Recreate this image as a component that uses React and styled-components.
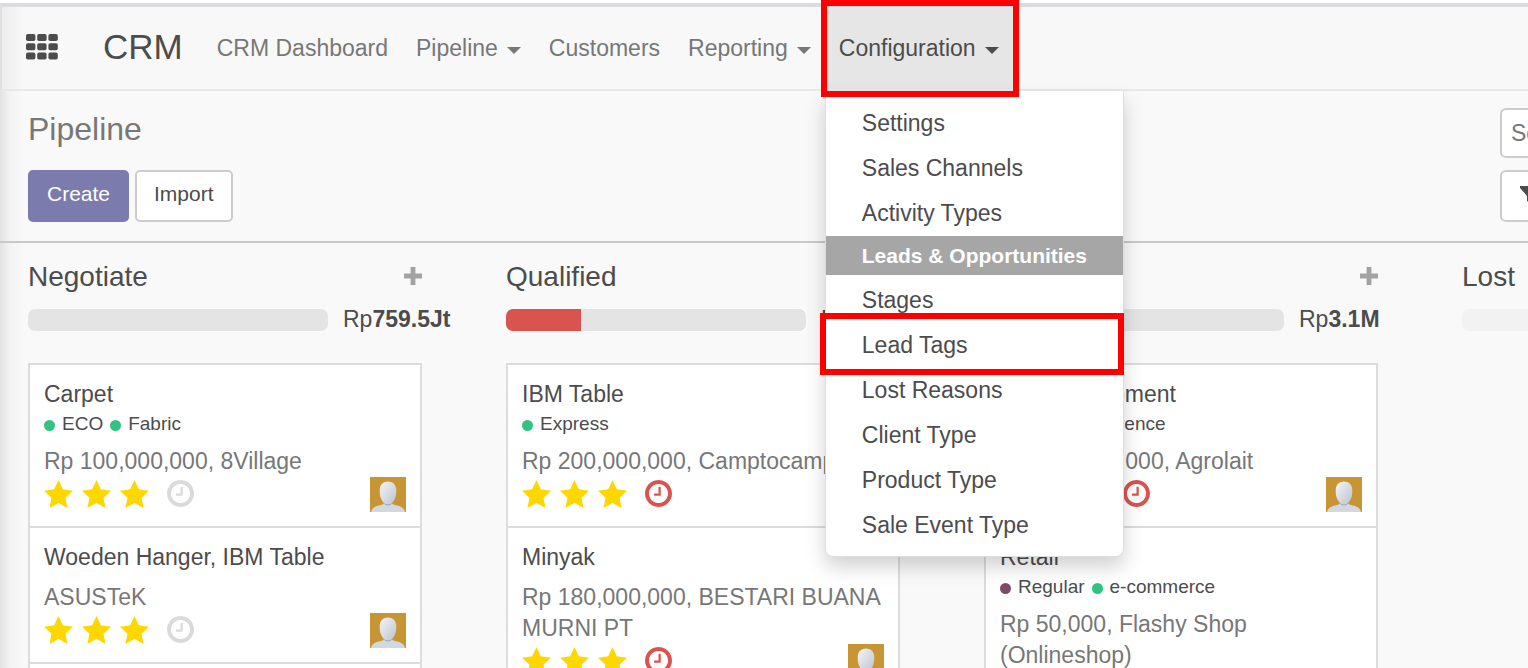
import { useState } from 'react';
import styled, { createGlobalStyle } from 'styled-components';

const stages = [
  {
    name: 'Negotiate',
    amount: '759.5Jt',
    progress: 0,
    cards: [
      {
        title: 'Carpet',
        tags: [{ name: 'ECO', color: '#30c381' }, { name: 'Fabric', color: '#30c381' }],
        info: 'Rp 100,000,000, 8Village',
      },
      { title: 'Woeden Hanger, IBM Table', info: 'ASUSTeK' },
      { title: '' },
    ],
  },
  {
    name: 'Qualified',
    amount: '430Jt',
    progress: 25,
    cards: [
      {
        title: 'IBM Table',
        tags: [{ name: 'Express', color: '#30c381' }],
        info: 'Rp 200,000,000, Camptocamp',
        late: true,
      },
      { title: 'Minyak', info: 'Rp 180,000,000, BESTARI BUANA MURNI PT', late: true },
    ],
  },
  {
    name: 'Won',
    amount: '3.1M',
    progress: 0,
    cards: [
      {
        title: 'Office Equipment',
        tags: [{ name: 'Video conference', color: '#30c381' }],
        info: 'Rp 500,000,000, Agrolait',
        late: true,
      },
      {
        title: 'Retail',
        tags: [{ name: 'Regular', color: '#814968' }, { name: 'e-commerce', color: '#30c381' }],
        info: 'Rp 50,000, Flashy Shop (Onlineshop)',
        late: true,
      },
    ],
  },
  { name: 'Lost', folded: true, progress: 0, cards: [] },
];

const configItems = ['Settings', 'Sales Channels', 'Activity Types'];
const leadItems = ['Stages', 'Lead Tags', 'Lost Reasons', 'Client Type', 'Product Type', 'Sale Event Type'];

function AppsIcon() {
  return (
    <svg width="32" height="26" viewBox="0 0 32 26" fill="#4c4c4c" aria-hidden="true">
      {[0, 9.3, 18.6].map((y) => [0, 11.2, 22.4].map((x) => (
        <rect key={`${x}-${y}`} x={x} y={y} width="9.4" height="7" rx="1.8" />
      )))}
    </svg>
  );
}

function Star() {
  return (
    <svg width="29" height="28" viewBox="0 0 29 28" fill="#ffd700" aria-hidden="true">
      <path d="M14.5 0 18.8 9.3 29 10.7 21.5 17.7 23.6 28 14.5 23 5.4 28 7.5 17.7 0 10.7 10.2 9.3Z" />
    </svg>
  );
}

function Clock() {
  return (
    <svg width="27" height="27" viewBox="128 128 1536 1536" fill="currentColor" aria-hidden="true">
      <path d="M1024 544v448q0 14-9 23t-23 9h-320q-14 0-23-9t-9-23v-64q0-14 9-23t23-9h224v-352q0-14 9-23t23-9h64q14 0 23 9t9 23zm416 352q0-148-73-273t-198-198-273-73-273 73-198 198-73 273 73 273 198 198 273 73 273-73 198-198 73-273zm224 0q0 209-103 385.5t-279.5 279.5-385.5 103-385.5-103-279.5-279.5-103-385.5 103-385.5 279.5-279.5 385.5-103 385.5 103 279.5 279.5 103 385.5z" />
    </svg>
  );
}

function Avatar() {
  return (
    <svg width="36" height="35" viewBox="0 0 36 35" role="img" aria-label="Salesperson">
      <defs>
        <linearGradient id="skin" x1="0" y1="0" x2="1" y2="1">
          <stop offset="0" stopColor="#f4f5f7" />
          <stop offset="1" stopColor="#bcc3cf" />
        </linearGradient>
      </defs>
      <rect width="36" height="35" fill="#c79534" />
      <path d="M1 35C2 30.500 6 29 10 28.300 13 27.800 14 27 14 25H22C22 27 23 27.800 26 28.300 30 29 34 30.500 35 35Z" fill="#d3d8df" />
      <path d="M13.500 26.500Q18 30.500 22.500 26.500L22 24H14Z" fill="#9fabbd" />
      <path d="M18 4.500C23.500 4.500 26.300 8 26.300 13.500 26.300 16.500 26 19.500 24.800 22 23.300 25.500 21 27.300 18 27.300S12.700 25.500 11.200 22C10 19.500 9.700 16.500 9.700 13.500 9.700 8 12.500 4.500 18 4.500Z" fill="url(#skin)" />
    </svg>
  );
}

export default function App() {
  const [open, setOpen] = useState(true);
  const [search, setSearch] = useState('');

  return (
    <>
      <GlobalStyle />
      <Page>
        <TopStrip />
        <Navbar>
          <AppsButton type="button" aria-label="Applications"><AppsIcon /></AppsButton>
          <Brand href="#crm">CRM</Brand>
          <NavLink href="#dashboard">CRM Dashboard</NavLink>
          <NavButton type="button">Pipeline<Caret /></NavButton>
          <NavLink href="#customers">Customers</NavLink>
          <NavButton type="button">Reporting<Caret /></NavButton>
          <Dropdown>
            <NavButton type="button" $active={open} aria-expanded={open} onClick={() => setOpen(!open)}>
              Configuration<Caret />
            </NavButton>
            <Frame />
            {open && (
              <Menu>
                {configItems.map((item) => <MenuItem href="#menu" key={item}>{item}</MenuItem>)}
                <MenuHeader>Leads &amp; Opportunities</MenuHeader>
                {leadItems.map((item) => (
                  <MenuItem href="#menu" key={item}>
                    {item}
                    {item === 'Lead Tags' && <ItemFrame />}
                  </MenuItem>
                ))}
              </Menu>
            )}
          </Dropdown>
        </Navbar>

        <ControlPanel>
          <div>
            <Title>Pipeline</Title>
            <Buttons>
              <Button type="button" $primary>Create</Button>
              <Button type="button">Import</Button>
            </Buttons>
          </div>
          <SearchArea>
            <SearchInput
              aria-label="Search"
              placeholder="Search..."
              value={search}
              onChange={(e) => setSearch(e.target.value)}
            />
            <FilterButton type="button" aria-label="Filters">
              <svg width="20" height="20" viewBox="0 0 20 20" fill="#4c4c4c" aria-hidden="true">
                <path d="M0 0h20v2l-7 8v10l-6-5v-5L0 2Z" />
              </svg>
            </FilterButton>
          </SearchArea>
        </ControlPanel>

        <Board>
          {stages.map((stage) => (
            <Column key={stage.name}>
              <ColumnHeader>
                <ColumnTitle>{stage.name}</ColumnTitle>
                {!stage.folded && (
                  <AddButton type="button" aria-label={`Add to ${stage.name}`}>
                    <svg width="18" height="18" viewBox="0 0 18 18" fill="#a3a3a3" aria-hidden="true">
                      <path d="M6.600 0h4.800v6.600H18v4.800h-6.600V18H6.600v-6.600H0V6.600h6.600Z" />
                    </svg>
                  </AddButton>
                )}
              </ColumnHeader>
              <Counter>
                <Progress $folded={stage.folded}>
                  <Bar style={{ width: `${stage.progress}%` }} />
                </Progress>
                {stage.amount && <Amount>Rp<b>{stage.amount}</b></Amount>}
              </Counter>
              {stage.cards.map((card) => (
                <Card key={card.title}>
                  <CardTitle>{card.title}</CardTitle>
                  {card.tags && (
                    <Tags>
                      {card.tags.map((tag) => (
                        <Tag key={tag.name}><Dot $color={tag.color} />{tag.name}</Tag>
                      ))}
                    </Tags>
                  )}
                  <CardInfo>{card.info}</CardInfo>
                  <CardFooter>
                    <Stars><Star /><Star /><Star /></Stars>
                    <Activity $late={card.late}><Clock /></Activity>
                    <Avatar />
                  </CardFooter>
                </Card>
              ))}
            </Column>
          ))}
        </Board>
      </Page>
    </>
  );
}

const GlobalStyle = createGlobalStyle`
  * {
    box-sizing: border-box;
  }
  body {
    margin: 0;
    background: #f9f9f9;
    color: #4c4c4c;
    font-family: "Liberation Sans", Arial, sans-serif;
    font-size: 23px;
    line-height: 31px;
  }
  button, input {
    font: inherit;
    color: inherit;
  }
  a {
    color: inherit;
    text-decoration: none;
  }
`;

const Page = styled.div`
  height: 100vh;
  overflow: hidden;
  display: flex;
  flex-direction: column;
  background: linear-gradient(to right, #e2e2e2, #f3f3f3 10px, #f9f9f9 24px);
`;

const TopStrip = styled.div`
  flex: none;
  height: 3px;
  background: #fff;
`;

const Navbar = styled.nav`
  display: flex;
  flex: none;
  height: 88px;
  border-top: 4px solid #dcdce0;
  border-bottom: 2px solid #e8e8e8;
  border-left: 2px solid #e0e0e0;
  background: linear-gradient(to right, #ededed, #f8f8f8 22px);
`;

const AppsButton = styled.button`
  display: flex;
  align-items: center;
  padding: 0 24px 2px;
  border: 0;
  background: none;
`;

const Brand = styled.a`
  padding: 0 20px 0 21px;
  font-size: 35px;
  line-height: 79px;
`;

const NavLink = styled.a`
  padding: 0 14px;
  line-height: 82px;
  color: #777;
  white-space: nowrap;
`;

const NavButton = styled.button`
  display: flex;
  align-items: center;
  gap: 9px;
  height: 82px;
  padding: 0 14px;
  border: 0;
  line-height: 82px;
  color: ${(props) => (props.$active ? '#4c4c4c' : '#777')};
  background: ${(props) => (props.$active ? '#e6e6e6' : 'none')};
`;

const Caret = styled.span`
  margin-top: 4px;
  border-top: 7px solid currentColor;
  border-left: 7px solid transparent;
  border-right: 7px solid transparent;
`;

const Dropdown = styled.div`
  position: relative;
`;

const Frame = styled.div`
  position: absolute;
  z-index: 3;
  inset: -7px -6px -8px -4px;
  border: 6px solid #f00;
  pointer-events: none;
`;

const Menu = styled.div`
  position: absolute;
  z-index: 2;
  top: 84px;
  left: 0;
  width: 299px;
  padding: 10px 0 8px;
  border: 1px solid #dedede;
  border-top: 0;
  border-radius: 0 0 8px 8px;
  background: #fff;
  box-shadow: 0 10px 20px rgba(0, 0, 0, 0.18);
`;

const MenuItem = styled.a`
  position: relative;
  display: block;
  padding: 7px 36px;
  white-space: nowrap;
`;

const ItemFrame = styled.span`
  position: absolute;
  inset: -10px -1px -7px -6px;
  border: 6px solid #f00;
`;

const MenuHeader = styled.div`
  margin-bottom: 3px;
  padding: 0 34px 0 36px;
  font-size: 21px;
  font-weight: bold;
  line-height: 39px;
  white-space: nowrap;
  color: #fff;
  background: #a6a6a6;
`;

const ControlPanel = styled.header`
  display: flex;
  flex: none;
  justify-content: space-between;
  padding: 16px 0 19px 28px;
  border-bottom: 2px solid #c8c8c8;
`;

const Title = styled.h1`
  margin: 0 0 19px;
  font-size: 32px;
  font-weight: normal;
  line-height: 44px;
  color: #777;
`;

const Buttons = styled.div`
  display: flex;
  gap: 6px;
`;

const Button = styled.button`
  height: 52px;
  padding: 0 17px 5px;
  border: 2px solid ${(props) => (props.$primary ? '#7c7bad' : '#ccc')};
  border-radius: 5px;
  font-size: 21px;
  color: ${(props) => (props.$primary ? '#fff' : '#4c4c4c')};
  background: ${(props) => (props.$primary ? '#7c7bad' : '#fff')};
`;

/* the search area runs past the right edge of the window */
const SearchArea = styled.div`
  display: flex;
  flex-direction: column;
  justify-content: flex-end;
  gap: 12px;
  width: 28px;
`;

const SearchInput = styled.input`
  width: 400px;
  height: 50px;
  padding: 0 9px;
  border: 2px solid #ccc;
  border-radius: 6px;
  background: #fff;
  &::placeholder {
    color: #777;
  }
`;

const FilterButton = styled.button`
  display: flex;
  width: 120px;
  height: 52px;
  padding: 14px 18px;
  border: 2px solid #ccc;
  border-radius: 6px;
  background: #fff;
`;

const Board = styled.main`
  display: flex;
  gap: 84px;
  padding: 16px 28px;
`;

const Column = styled.section`
  flex: none;
  width: 394px;
`;

const ColumnHeader = styled.div`
  display: flex;
  align-items: center;
  justify-content: space-between;
  height: 36px;
`;

const ColumnTitle = styled.h2`
  margin: 0;
  font-size: 28px;
  font-weight: normal;
  line-height: 36px;
`;

const AddButton = styled.button`
  display: flex;
  padding: 0 0 2px;
  border: 0;
  background: none;
`;

const Counter = styled.div`
  display: flex;
  align-items: center;
  gap: 15px;
  height: 31px;
  margin: 9px 0 28px;
`;

const Progress = styled.div`
  flex: none;
  width: 300px;
  height: 22px;
  overflow: hidden;
  border-radius: 7px;
  background: ${(props) => (props.$folded ? '#f2f2f2' : '#e4e4e4')};
`;

const Bar = styled.div`
  height: 100%;
  background: #d9534f;
`;

const Amount = styled.span`
  white-space: nowrap;
`;

const Card = styled.article`
  padding: 14px;
  border: 2px solid #dcdcdc;
  background: #fff;
  & + & {
    margin-top: -2px;
  }
`;

const CardTitle = styled.div`
  white-space: nowrap;
`;

const Tags = styled.div`
  display: flex;
  gap: 7px;
`;

const Tag = styled.span`
  display: flex;
  align-items: center;
  gap: 7px;
  font-size: 19px;
  line-height: 27px;
  white-space: nowrap;
`;

const Dot = styled.span`
  width: 11px;
  height: 11px;
  margin-top: 3px;
  border-radius: 50%;
  background: ${(props) => props.$color};
`;

const CardInfo = styled.div`
  margin-top: 9px;
  color: #777;
`;

const CardFooter = styled.div`
  display: flex;
  height: 35px;
  & > :last-child {
    margin-left: auto;
  }
`;

const Stars = styled.span`
  display: flex;
  gap: 9px;
  padding-top: 3px;
`;

const Activity = styled.span`
  display: flex;
  margin-left: 18px;
  padding-top: 3px;
  color: ${(props) => (props.$late ? '#d9534f' : '#dadada')};
`;
